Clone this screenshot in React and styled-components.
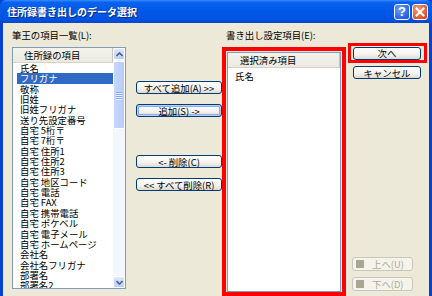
import React from "react";
import styled, { createGlobalStyle } from "styled-components";

const GlobalStyle = createGlobalStyle`
	html, body {
		margin: 0;
		padding: 0;
		background: #ece9d8;
	}
	body {
		font-family: "Noto Sans CJK JP", "Liberation Sans", sans-serif;
		font-size: 9.4px;
		color: #000;
		overflow: hidden;
	}
`;

const leftItems = [
	"氏名",
	"フリガナ",
	"敬称",
	"旧姓",
	"旧姓フリガナ",
	"送り先設定番号",
	"自宅 5桁〒",
	"自宅 7桁〒",
	"自宅 住所1",
	"自宅 住所2",
	"自宅 住所3",
	"自宅 地区コード",
	"自宅 電話",
	"自宅 FAX",
	"自宅 携帯電話",
	"自宅 ポケベル",
	"自宅 電子メール",
	"自宅 ホームページ",
	"会社名",
	"会社名フリガナ",
	"部署名",
	"部署名2",
];

export default function App() {
	return (
		<>
			<GlobalStyle />
			<Window>
				<TitleBar>
					<Title>住所録書き出しのデータ選択</Title>
					<TitleButtons>
						<HelpButton>?</HelpButton>
						<CloseButton>
							<svg width="10" height="10" viewBox="0 0 10 10">
								<path
									d="M1.5 1.5 L8.5 8.5 M8.5 1.5 L1.5 8.5"
									stroke="#fff"
									strokeWidth="2"
									strokeLinecap="square"
								/>
							</svg>
						</CloseButton>
					</TitleButtons>
				</TitleBar>
				<Body>
					<LeftCol>
						<Label>筆王の項目一覧(L):</Label>
						<ListBox height={242}>
							<ListContent>
								<Header indent={11}>住所録の項目</Header>
								{leftItems.map((item, i) => (
									<Row key={i} selected={i === 1}>
										{item}
									</Row>
								))}
							</ListContent>
							<Scrollbar>
								<ArrowButton>
									<svg width="7" height="5" viewBox="0 0 7 5">
										<path d="M0.5 4 L3.5 1 L6.5 4" stroke="#4d6185" strokeWidth="1.6" fill="none" />
									</svg>
								</ArrowButton>
								<Thumb>
									<Grip />
									<Grip />
									<Grip />
									<Grip />
								</Thumb>
								<Track />
								<ArrowButton>
									<svg width="7" height="5" viewBox="0 0 7 5">
										<path d="M0.5 1 L3.5 4 L6.5 1" stroke="#4d6185" strokeWidth="1.6" fill="none" />
									</svg>
								</ArrowButton>
							</Scrollbar>
						</ListBox>
					</LeftCol>

					<MidCol>
						<Button>すべて追加(A) &gt;&gt;</Button>
						<Button focused>追加(S) -&gt;</Button>
						<Spacer h={28} />
						<Button>&lt;- 削除(C)</Button>
						<Button>&lt;&lt; すべて削除(R)</Button>
					</MidCol>

					<RightCol>
						<Label indent={4}>書き出し設定項目(E):</Label>
						<RedFrame>
							<ListBox height={240}>
								<ListContent>
									<Header indent={12}>選択済み項目</Header>
									<PlainRow>氏名</PlainRow>
								</ListContent>
							</ListBox>
						</RedFrame>
					</RightCol>

					<FarCol>
						<TopButtons>
							<RedButtonFrame>
								<Button>次へ</Button>
							</RedButtonFrame>
							<SideButton>キャンセル</SideButton>
						</TopButtons>
						<BottomButtons>
							<DisabledButton>
								<GraySquare />
								<span>上へ(U)</span>
							</DisabledButton>
							<DisabledButton>
								<GraySquare />
								<span>下へ(D)</span>
							</DisabledButton>
						</BottomButtons>
					</FarCol>
				</Body>
			</Window>
		</>
	);
}

const Window = styled.div`
	width: 432px;
	height: 296px;
	box-sizing: border-box;
	display: flex;
	flex-direction: column;
	background: #0842d4;
	padding: 0 3px 4px 3px;
`;

const TitleBar = styled.div`
	height: 23px;
	margin: 0 -3px;
	flex-shrink: 0;
	display: flex;
	align-items: center;
	justify-content: space-between;
	padding: 0 4px 0 7px;
	background: linear-gradient(
		#3a8cff 0%,
		#0a62f0 10%,
		#0058e8 45%,
		#0053e2 85%,
		#0244c8 100%
	);
	border-radius: 6px 6px 0 0;
`;

const Title = styled.div`
	color: #fff;
	font-weight: bold;
	font-size: 10px;
	letter-spacing: 0;
	text-shadow: 1px 1px 0 #0a2a8a;
`;

const TitleButtons = styled.div`
	display: flex;
	gap: 2px;
`;

const TitleBtn = styled.div`
	width: 16px;
	height: 16px;
	box-sizing: border-box;
	border: 1px solid #fff;
	border-radius: 3px;
	display: flex;
	align-items: center;
	justify-content: center;
	color: #fff;
`;

const HelpButton = styled(TitleBtn)`
	background: radial-gradient(circle at 35% 30%, #6ea0ff, #2a62e8 70%, #1a4cd0);
	font-family: "Liberation Sans", sans-serif;
	font-weight: bold;
	font-size: 13px;
`;

const CloseButton = styled(TitleBtn)`
	background: radial-gradient(circle at 35% 30%, #f49a7a, #e0562c 70%, #c8401c);
`;

const Body = styled.div`
	flex: 1;
	background: #ece9d8;
	display: flex;
	padding: 5px 0 0 9px;
	box-sizing: border-box;
`;

const Label = styled.div`
	height: 14px;
	line-height: 14px;
	padding-left: ${({ indent }) => indent || 0}px;
	margin-bottom: 5px;
	white-space: nowrap;
`;

const LeftCol = styled.div`
	width: 114px;
	display: flex;
	flex-direction: column;
`;

const ListBox = styled.div`
	height: ${({ height }) => height}px;
	box-sizing: border-box;
	border: 1px solid #7f9db9;
	background: #fff;
	display: flex;
	overflow: hidden;
`;

const ListContent = styled.div`
	flex: 1;
	display: flex;
	flex-direction: column;
	overflow: hidden;
`;

const Header = styled.div`
	height: 15px;
	line-height: 14px;
	flex-shrink: 0;
	box-sizing: border-box;
	background: linear-gradient(#f3f2ec, #ebeae2);
	border-bottom: 1px solid #d6d3c5;
	border-right: 1px solid #c8c5b5;
	padding-left: ${({ indent }) => indent}px;
	white-space: nowrap;
`;

const Row = styled.div`
	height: 10.35px;
	line-height: 10.35px;
	flex-shrink: 0;
	margin: 0 0 0 4px;
	padding-left: 3px;
	white-space: nowrap;
	background: ${({ selected }) => (selected ? "#316ac5" : "transparent")};
	color: ${({ selected }) => (selected ? "#fff" : "#000")};
`;

const PlainRow = styled.div`
	height: 14px;
	line-height: 16px;
	padding-left: 7px;
`;

const Scrollbar = styled.div`
	width: 12px;
	flex-shrink: 0;
	display: flex;
	flex-direction: column;
	background: #f3f6fd;
	padding: 0;
`;

const ArrowButton = styled.div`
	height: 12px;
	box-sizing: border-box;
	border: 1px solid #fff;
	border-radius: 2px;
	background: linear-gradient(#dce6fd, #bccffb);
	display: flex;
	align-items: center;
	justify-content: center;
	flex-shrink: 0;
`;

const Thumb = styled.div`
	height: 68px;
	margin-top: 1px;
	box-sizing: border-box;
	border: 1px solid #fff;
	border-radius: 2px;
	background: linear-gradient(90deg, #c6d7fc, #b8ccfa);
	display: flex;
	flex-direction: column;
	align-items: center;
	justify-content: center;
	gap: 1px;
`;

const Grip = styled.div`
	width: 6px;
	height: 1px;
	background: #8aa7ea;
	box-shadow: 0 1px 0 #eef3ff;
`;

const Track = styled.div`
	flex: 1;
`;

const MidCol = styled.div`
	width: 86px;
	margin-left: 10px;
	padding-top: 53px;
	display: flex;
	flex-direction: column;
	gap: 10px;
`;

const Spacer = styled.div`
	height: ${({ h }) => h}px;
	margin-top: -10px;
`;

const Button = styled.div`
	height: 13px;
	box-sizing: border-box;
	border: 1px solid #003c74;
	border-radius: 3px;
	background: linear-gradient(#ffffff, #f3f2ee 60%, #dcdad0);
	display: flex;
	align-items: center;
	justify-content: center;
	white-space: nowrap;
	box-shadow: ${({ focused }) =>
		focused ? "inset 0 0 0 1px #b8d0f8, inset 0 0 0 2px #89adf0" : "none"};
`;

const RightCol = styled.div`
	width: 124px;
	display: flex;
	flex-direction: column;
`;

const RedFrame = styled.div`
	height: 249px;
	box-sizing: border-box;
	border: 4px solid #ff0000;
	padding: 1px;
	background: #ece9d8;
`;

const FarCol = styled.div`
	width: 79px;
	margin-left: 2px;
	padding: 15px 0 5px 0;
	display: flex;
	flex-direction: column;
	justify-content: space-between;
`;

const TopButtons = styled.div`
	display: flex;
	flex-direction: column;
	gap: 3px;
`;

const RedButtonFrame = styled.div`
	height: 20px;
	box-sizing: border-box;
	border: 3px solid #ff0000;
	padding: 0 3px 0 2px;
	display: flex;
	flex-direction: column;
	justify-content: center;
`;

const SideButton = styled(Button)`
	margin: 0 6px 0 5px;
`;

const BottomButtons = styled.div`
	display: flex;
	flex-direction: column;
	gap: 6px;
	padding: 0 14px 0 4px;
`;

const DisabledButton = styled.div`
	height: 14px;
	box-sizing: border-box;
	border: 1px solid #c9c7ba;
	border-radius: 3px;
	background: #f5f4ea;
	color: #aca899;
	display: flex;
	align-items: center;
	gap: 8px;
	padding-left: 3px;
	white-space: nowrap;
`;

const GraySquare = styled.div`
	width: 8px;
	height: 8px;
	background: #a9a694;
`;
